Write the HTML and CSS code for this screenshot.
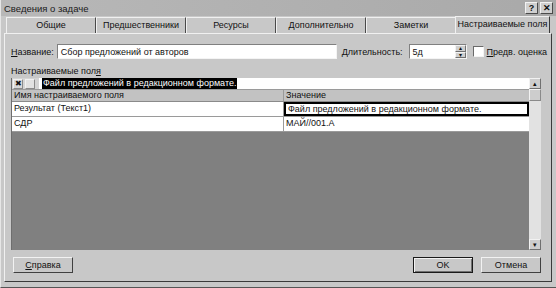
FILE: index.html
```html
<!DOCTYPE html>
<html>
<head>
    <title>Сведения о задаче</title>
    <meta charset="utf-8">
    <link rel="stylesheet" href="styles.css">
</head>
<body>
    <div class="dialog">
        <div class="titlebar">
            <span class="title">Сведения о задаче</span>
            <span class="tbtn">?</span>
            <span class="tbtn">✕</span>
        </div>

        <div class="tabs">
            <div class="tab">Общие</div>
            <div class="tab">Предшественники</div>
            <div class="tab">Ресурсы</div>
            <div class="tab">Дополнительно</div>
            <div class="tab">Заметки</div>
            <div class="tab active">Настраиваемые поля</div>
        </div>

        <div class="panel">
            <div class="name-row">
                <label class="lbl"><u>Н</u>азвание:</label>
                <div class="field name-field">Сбор предложений от авторов</div>
                <label class="lbl dur-lbl"><u>Д</u>лительность:</label>
                <div class="field dur-field">
                    <span class="dur-val">5д</span>
                    <span class="spin"><span>▴</span><span>▾</span></span>
                </div>
                <span class="check"></span>
                <label class="lbl"><u>П</u>редв. оценка</label>
            </div>

            <div class="section-lbl">Настраиваемые пол<u>я</u></div>

            <div class="grid-wrap">
                <div class="grid">
                    <div class="edit-bar">
                        <span class="ebtn">✖</span>
                        <span class="ebtn off"></span>
                        <div class="edit-input">
                            <span class="edit-text">Файл предложений в редакционном формате.</span>
                        </div>
                    </div>
                    <div class="grow head">
                        <div class="cell c1">Имя настраиваемого поля</div>
                        <div class="cell c2">Значение</div>
                    </div>
                    <div class="grow">
                        <div class="cell c1">Результат (Текст1)</div>
                        <div class="cell c2 sel">Файл предложений в редакционном формате.</div>
                    </div>
                    <div class="grow">
                        <div class="cell c1">СДР</div>
                        <div class="cell c2">МАЙ//001.А</div>
                    </div>
                    <div class="empty"></div>
                </div>
                <div class="scroll">
                    <span class="sarrow">▴</span>
                    <span class="thumb"></span>
                    <span class="strack"></span>
                    <span class="sarrow">▾</span>
                </div>
            </div>

            <div class="buttons">
                <div class="btn"><u>С</u>правка</div>
                <div class="spacer"></div>
                <div class="btn default">OK</div>
                <div class="btn">Отмена</div>
            </div>
        </div>
    </div>
</body>
</html>
```

FILE: styles.css
```css
body {
    margin: 0;
    font-family: "Liberation Sans", Arial, sans-serif;
    font-size: 9px;
    color: #111;
    background: #c8c8c8;
}
.dialog {
    width: 556px;
    height: 288px;
    box-sizing: border-box;
    background: #c8c8c8;
    border-left: 1px solid #e6e6e6;
    border-bottom: 1px solid #555;
    display: flex;
    flex-direction: column;
}
.titlebar {
    height: 16px;
    flex: none;
    background: linear-gradient(to right, #b8b8b8, #a9a9a9);
    display: flex;
    align-items: center;
    padding: 0 3px 0 3px;
    gap: 2px;
}
.title {
    flex: 1;
    font-size: 9.5px;
    color: #1a1a1a;
}
.tbtn {
    width: 13px;
    height: 12px;
    box-sizing: border-box;
    background: #cfcfcf;
    border: 1px solid;
    border-color: #f2f2f2 #4a4a4a #4a4a4a #f2f2f2;
    font-size: 9px;
    font-weight: bold;
    line-height: 10px;
    text-align: center;
}
.tabs {
    display: flex;
    flex: none;
    padding: 0 5px 0 5px;
    height: 17px;
    box-sizing: border-box;
    align-items: flex-end;
}
.tab {
    width: 90px;
    height: 16px;
    box-sizing: border-box;
    border: 1px solid;
    border-color: #f0f0f0 #4a4a4a transparent #f0f0f0;
    border-bottom: none;
    text-align: center;
    line-height: 14px;
    white-space: nowrap;
}
.tab.active {
    width: 95px;
    height: 17px;
    margin-left: -1px;
    line-height: 14px;
    border-color: #f0f0f0 #3a3a3a transparent #f0f0f0;
}
.panel {
    flex: none;
    height: 249px;
    box-sizing: border-box;
    margin: 0 4px 5px 3px;
    border: 1px solid;
    border-color: #f0f0f0 #3a3a3a #3a3a3a #f0f0f0;
    display: flex;
    flex-direction: column;
    padding: 10px 10px 7px 6px;
}
.name-row {
    display: flex;
    align-items: center;
    height: 15px;
    flex: none;
}
.name-row > * {
    flex: none;
}
.lbl {
    white-space: nowrap;
}
.field {
    height: 15px;
    box-sizing: border-box;
    background: #fff;
    border: 1px solid;
    border-color: #808080 #f4f4f4 #f4f4f4 #808080;
    padding: 1px 3px;
    line-height: 12px;
    white-space: nowrap;
}
.name-field {
    width: 280px;
    margin-left: 3px;
}
.dur-lbl {
    margin-left: 5px;
}
.dur-field {
    width: 58px;
    margin-left: 6px;
    display: flex;
    padding-right: 0;
}
.dur-val {
    flex: 1;
}
.spin {
    width: 11px;
    display: flex;
    flex-direction: column;
    margin: -1px 0;
}
.spin span {
    flex: 1;
    background: #cfcfcf;
    border: 1px solid;
    border-color: #f2f2f2 #707070 #707070 #f2f2f2;
    font-size: 6px;
    line-height: 4px;
    text-align: center;
}
.check {
    width: 9px;
    height: 9px;
    background: #fff;
    border: 1px solid;
    border-color: #6a6a6a #f4f4f4 #f4f4f4 #6a6a6a;
    margin: 0 3px 0 6px;
}
.section-lbl {
    margin-top: 7px;
    height: 12px;
    flex: none;
}
.grid-wrap {
    display: flex;
    height: 172px;
    flex: none;
}
.grid {
    flex: 1;
    min-width: 0;
    display: flex;
    flex-direction: column;
    border-left: 1px solid #6e6e6e;
}
.edit-bar {
    height: 11px;
    display: flex;
    align-items: center;
    background: #d4d4d4;
    border-bottom: 1px solid #9a9a9a;
}
.ebtn {
    flex: none;
    width: 10px;
    height: 10px;
    box-sizing: border-box;
    margin-left: 1px;
    background: #d8d8d8;
    border: 1px solid;
    border-color: #f2f2f2 #8a8a8a #8a8a8a #f2f2f2;
    font-size: 8px;
    line-height: 8px;
    text-align: center;
}
.ebtn.off {
    margin-left: 2px;
    background: #e2e2e2;
}
.edit-input {
    flex: 1;
    min-width: 0;
    height: 11px;
    margin-left: 4px;
    background: #fff;
    display: flex;
    align-items: center;
    padding-left: 3px;
    white-space: nowrap;
}
.edit-text {
    background: #000;
    color: #fff;
    line-height: 11px;
    padding: 0 1px;
}
.grow {
    display: flex;
    height: 14px;
    background: #fff;
    border-bottom: 1px solid #9a9a9a;
}
.grow.head {
    height: 11px;
    background: #c2c2c2;
    border-bottom: 1px solid #8a8a8a;
}
.cell {
    padding: 0 2px;
    line-height: 13px;
    white-space: nowrap;
    box-sizing: border-box;
}
.head .cell {
    line-height: 11px;
}
.c1 {
    width: 272px;
    border-right: 1px solid #9a9a9a;
}
.c2 {
    flex: 1;
}
.cell.sel {
    border: 2px solid #000;
    line-height: 10px;
}
.empty {
    flex: 1;
    background: #808080;
}
.scroll {
    width: 12px;
    flex: none;
    display: flex;
    flex-direction: column;
    background: #dcdcdc;
}
.sarrow {
    height: 11px;
    background: #cdcdcd;
    border: 1px solid;
    border-color: #f2f2f2 #707070 #707070 #f2f2f2;
    box-sizing: border-box;
    font-size: 7px;
    line-height: 9px;
    text-align: center;
}
.thumb {
    height: 12px;
    background: #cdcdcd;
    border: 1px solid;
    border-color: #f2f2f2 #8a8a8a #8a8a8a #f2f2f2;
    box-sizing: border-box;
}
.strack {
    flex: 1;
    background: #e2e2e2;
}
.buttons {
    display: flex;
    flex: none;
    gap: 8px;
    margin-top: 7px;
    padding: 0 0 0 2px;
}
.spacer {
    flex: 1;
}
.btn {
    width: 60px;
    height: 16px;
    box-sizing: border-box;
    border: 1px solid;
    border-color: #f2f2f2 #404040 #404040 #f2f2f2;
    text-align: center;
    line-height: 14px;
}
.btn.default {
    border-color: #1a1a1a;
    box-shadow: inset 1px 1px 0 #f2f2f2, inset -1px -1px 0 #707070;
}
```
